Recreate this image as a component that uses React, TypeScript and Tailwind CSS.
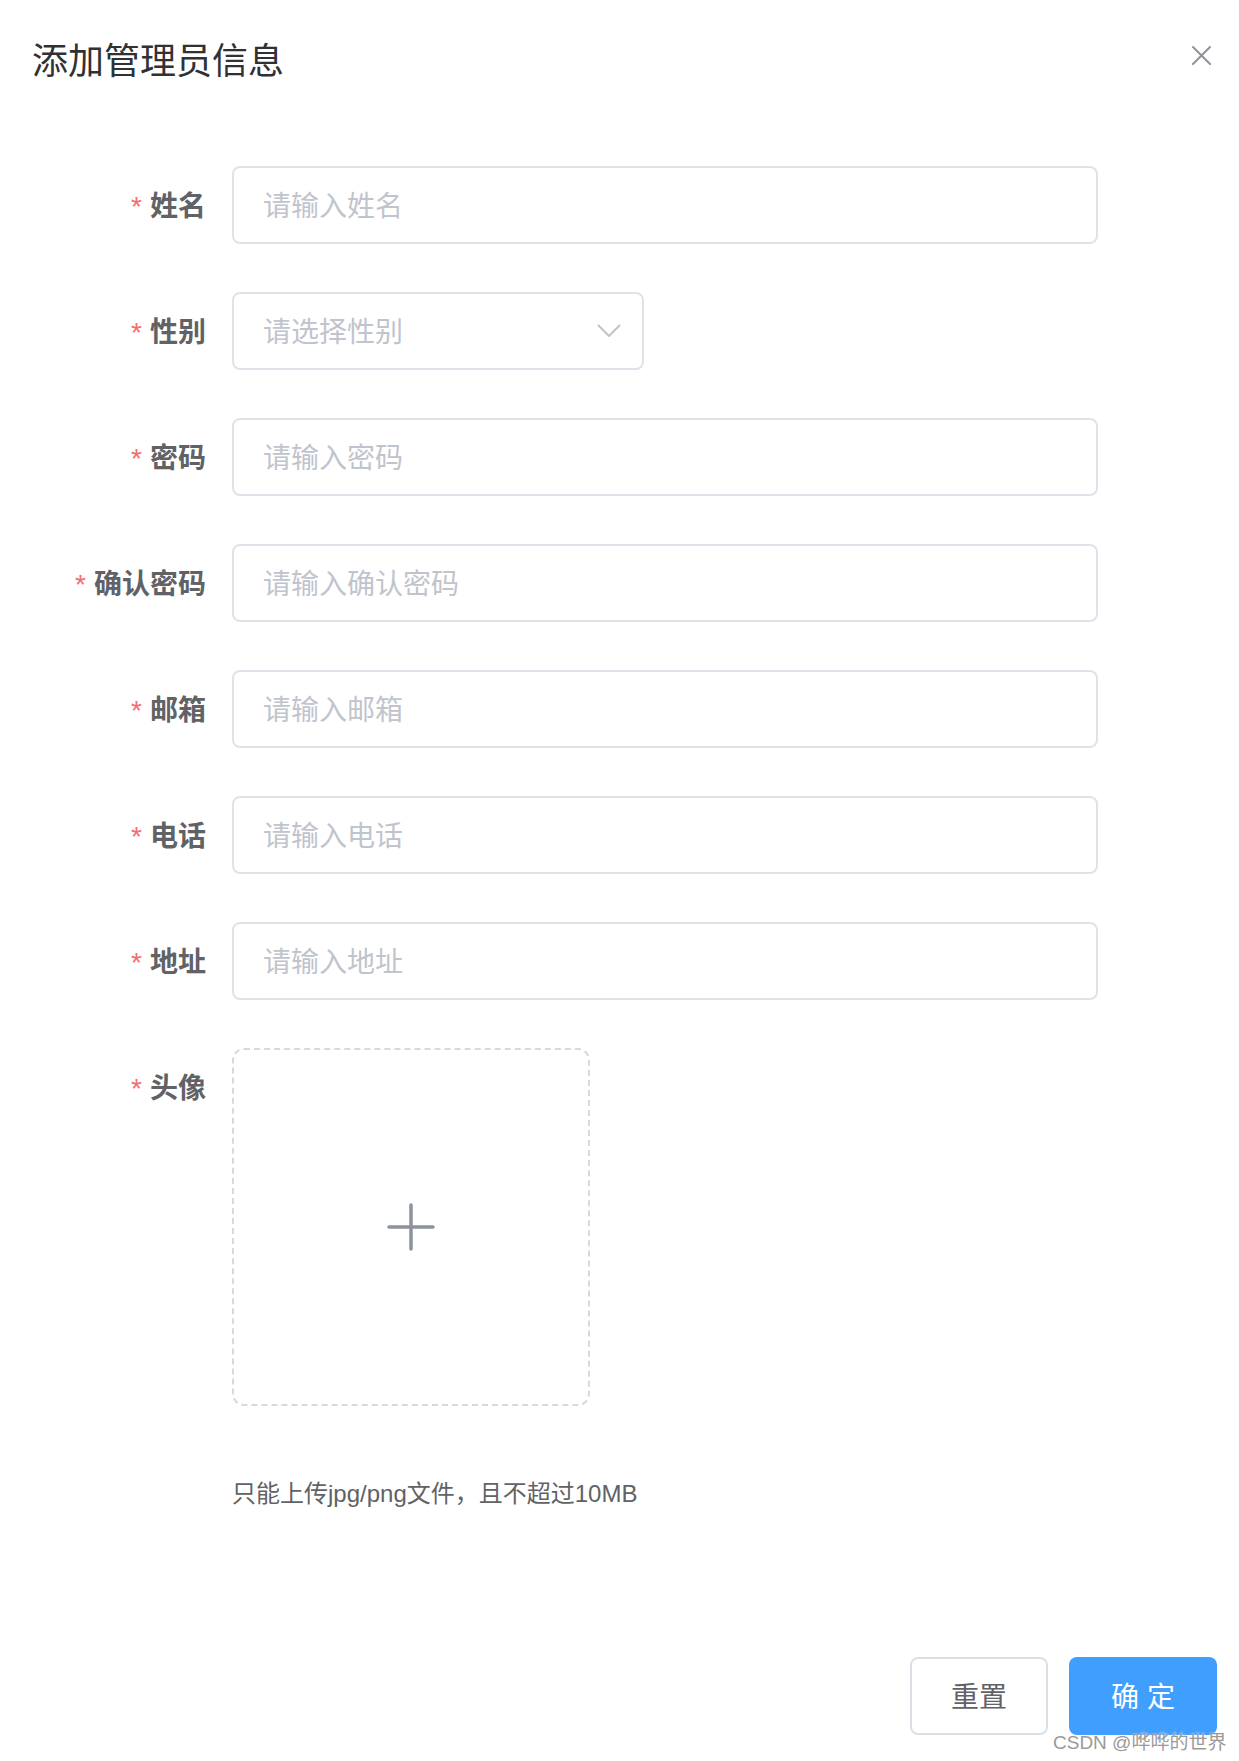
import React from "react";

const FONT = { fontFamily: '"Liberation Sans", "Noto Sans CJK SC", sans-serif' };

function Label({ text }: { text: string }) {
  return (
    <div className="w-[232px] shrink-0 h-[78px] flex items-center justify-end pr-[26px] pt-[3px] text-[28px] font-bold text-[#606266]">
      <span className="text-[#f56c6c] font-normal mr-[8px] text-[28px]">*</span>
      <span>{text}</span>
    </div>
  );
}

function InputRow({ label, placeholder }: { label: string; placeholder: string }) {
  return (
    <div className="flex items-start mb-[48px]">
      <Label text={label} />
      <input
        readOnly
        placeholder={placeholder}
        className="w-[866px] h-[78px] border-2 border-[#dfe2e8] rounded-[8px] pl-[29px] pt-[4px] text-[28px] outline-none placeholder:text-[#c0c4cc] bg-white"
      />
    </div>
  );
}

export default function App() {
  return (
    <div className="relative w-[1239px] h-[1761px] bg-white overflow-hidden" style={FONT}>
      {/* header */}
      <div className="flex items-start justify-between pl-[32px] pr-[28px]">
        <div className="mt-[43px] text-[36px] leading-[38px] text-[#303133]">添加管理员信息</div>
        <button className="mt-[46px] w-[19px] h-[19px]" aria-label="close">
          <svg width="19" height="19" viewBox="0 0 19 19">
            <path d="M1 1 L18 18 M18 1 L1 18" stroke="#909399" strokeWidth="2" strokeLinecap="round" />
          </svg>
        </button>
      </div>

      {/* form */}
      <div className="mt-[85px]">
        <InputRow label="姓名" placeholder="请输入姓名" />
        <div className="flex items-start mb-[48px]">
          <Label text="性别" />
          <div className="w-[412px] h-[78px] border-2 border-[#dfe2e8] rounded-[8px] pl-[29px] pr-[21px] flex items-center justify-between">
            <span className="text-[28px] text-[#c0c4cc] pt-[4px]">请选择性别</span>
            <svg width="24" height="14" viewBox="0 0 24 14">
              <polyline points="1.5,1.5 12,12 22.5,1.5" fill="none" stroke="#c0c4cc" strokeWidth="2" strokeLinecap="round" strokeLinejoin="round" />
            </svg>
          </div>
        </div>
        <InputRow label="密码" placeholder="请输入密码" />
        <InputRow label="确认密码" placeholder="请输入确认密码" />
        <InputRow label="邮箱" placeholder="请输入邮箱" />
        <InputRow label="电话" placeholder="请输入电话" />
        <InputRow label="地址" placeholder="请输入地址" />

        <div className="flex items-start mb-[48px]">
          <Label text="头像" />
          <div className="w-[358px] h-[358px] border-2 border-dashed border-[#d9d9d9] rounded-[12px] flex items-center justify-center">
            <svg width="48" height="48" viewBox="0 0 48 48">
              <path d="M24 2 V46 M2 24 H46" stroke="#8c939d" strokeWidth="3.5" strokeLinecap="round" />
            </svg>
          </div>
        </div>

        <div className="flex items-start">
          <div className="w-[232px] shrink-0" />
          <div className="h-[78px] flex items-center pt-[2px] text-[24px] text-[#606266]">只能上传jpg/png文件，且不超过10MB</div>
        </div>
      </div>

      {/* footer */}
      <div className="flex justify-end gap-[21px] pr-[22px] mt-[125px]">
        <button className="w-[138px] h-[78px] border-2 border-[#dcdfe6] rounded-[8px] bg-white pt-[3px] text-[28px] text-[#606266]">重置</button>
        <button className="w-[148px] h-[78px] rounded-[8px] bg-[#409eff] pt-[3px] text-[28px] text-white">确 定</button>
      </div>

      <div
        className="absolute left-[1053px] top-[1731px] text-[19px] leading-[24px] text-[#9a9a9a] whitespace-nowrap"
        style={{ textShadow: "0 0 2px #fff" }}
      >
        CSDN @哗哗的世界
      </div>
    </div>
  );
}
